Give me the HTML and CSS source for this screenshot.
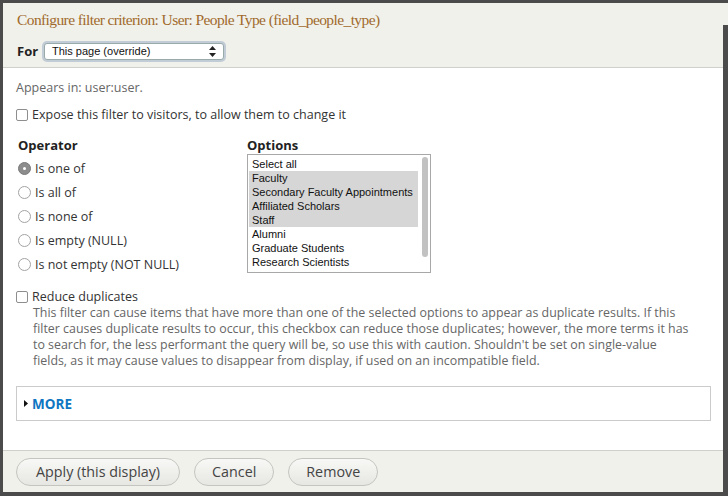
FILE: index.html
```html
<!DOCTYPE html>
<html>
<head>
<meta charset="utf-8">
<link rel="stylesheet" href="styles.css">
</head>
<body>
<div class="dialog">
  <div class="header">
    <h1 class="title">Configure filter criterion: User: People Type (field_people_type)</h1>
    <div class="for-row">
      <span class="for-label">For</span>
      <div class="select">
        <span>This page (override)</span>
        <svg class="arrows" width="7" height="11" viewBox="0 0 7 11"><path d="M3.5 0 L7 4 L0 4 Z M3.5 11 L7 7 L0 7 Z" fill="#222"/></svg>
      </div>
    </div>
  </div>
  <div class="body">
    <div class="appears">Appears in: user:user.</div>
    <label class="check-row"><span class="checkbox"></span>Expose this filter to visitors, to allow them to change it</label>
    <div class="columns">
      <div class="operator">
        <div class="col-title">Operator</div>
        <div class="radios">
          <label class="radio-row"><span class="radio checked"><span class="dot"></span></span>Is one of</label>
          <label class="radio-row"><span class="radio"></span>Is all of</label>
          <label class="radio-row"><span class="radio"></span>Is none of</label>
          <label class="radio-row"><span class="radio"></span>Is empty (NULL)</label>
          <label class="radio-row"><span class="radio"></span>Is not empty (NOT NULL)</label>
        </div>
      </div>
      <div class="options">
        <div class="col-title">Options</div>
        <div class="listbox">
          <div class="items">
            <div class="item">Select all</div>
            <div class="item sel">Faculty</div>
            <div class="item sel">Secondary Faculty Appointments</div>
            <div class="item sel">Affiliated Scholars</div>
            <div class="item sel">Staff</div>
            <div class="item">Alumni</div>
            <div class="item">Graduate Students</div>
            <div class="item">Research Scientists</div>
          </div>
          <div class="scroll"><div class="thumb"></div></div>
        </div>
      </div>
    </div>
    <label class="check-row reduce"><span class="checkbox"></span>Reduce duplicates</label>
    <p class="desc">This filter can cause items that have more than one of the selected options to appear as duplicate results. If this<br>filter causes duplicate results to occur, this checkbox can reduce those duplicates; however, the more terms it has<br>to search for, the less performant the query will be, so use this with caution. Shouldn't be set on single-value<br>fields, as it may cause values to disappear from display, if used on an incompatible field.</p>
    <div class="more">
      <svg class="tri" width="4" height="7" viewBox="0 0 4 7"><path d="M0 0 L4 3.5 L0 7 Z" fill="#111"/></svg>
      <span class="more-link">MORE</span>
    </div>
  </div>
  <div class="footer">
    <button class="btn wide">Apply (this display)</button>
    <button class="btn">Cancel</button>
    <button class="btn">Remove</button>
  </div>
</div>
</body>
</html>
```
FILE: styles.css
```css
html, body {
  margin: 0;
  padding: 0;
}
body {
  background: #4b4b4b;
  width: 728px;
  height: 496px;
  overflow: hidden;
  position: relative;
  font-family: "Open Sans", "DejaVu Sans", sans-serif;
}
.dialog {
  margin: 3px 0 0 3px;
  width: 720px;
  height: 489px;
  background: #fff;
  display: flex;
  flex-direction: column;
  position: relative;
}
.header {
  background: #f1f1eb;
  height: 64px;
  border-bottom: 1px solid #cfcfcb;
  padding: 0 0 0 14px;
  position: relative;
}
.header::after {
  content: "";
  position: absolute;
  top: 0;
  right: -5px;
  width: 5px;
  height: 22px;
  background: #f1f1eb;
}
.title {
  margin: 0;
  padding-top: 7px;
  font-family: "Liberation Serif", serif;
  font-weight: normal;
  font-size: 15.5px;
  letter-spacing: -0.6px;
  color: #a06a2c;
  line-height: 20px;
}
.for-row {
  display: flex;
  align-items: center;
  margin-top: 12px;
}
.for-label {
  font-weight: bold;
  font-size: 13px;
  color: #222;
  width: 25px;
}
.select {
  width: 164px;
  height: 15px;
  border: 1px solid #9aa;
  box-shadow: 0 0 0 2px #c2ccd6;
  border-radius: 3px;
  background: #fff;
  display: flex;
  align-items: center;
  justify-content: space-between;
  padding: 0 7px 0 7px;
  box-sizing: content-box;
  font-family: "Liberation Sans", sans-serif;
  font-size: 11px;
  color: #111;
  margin-left: 2px;
}
.body {
  flex: 1;
  padding: 12px 12px 0 13px;
  font-size: 12.5px;
  color: #333;
}
.appears {
  color: #666;
  line-height: 15px;
}
.check-row {
  display: flex;
  align-items: center;
  margin-top: 12px;
  color: #333;
  line-height: 15px;
}
.checkbox {
  width: 10px;
  height: 10px;
  border: 1px solid #8e8e8e;
  border-radius: 2px;
  background: #fff;
  margin-right: 4px;
  display: inline-block;
}
.columns {
  display: flex;
  margin-top: 15px;
}
.operator {
  width: 231px;
  padding-left: 2px;
  box-sizing: border-box;
}
.col-title {
  font-weight: bold;
  font-size: 13px;
  color: #222;
  line-height: 16px;
}
.radios { margin-top: 3px; }
.radio-row {
  display: flex;
  align-items: center;
  height: 24px;
  color: #333;
}
.radio {
  width: 11px;
  height: 11px;
  border: 1px solid #a3a3a3;
  border-radius: 50%;
  background: #fff;
  margin-right: 4px;
  display: inline-flex;
  align-items: center;
  justify-content: center;
}
.radio.checked {
  background: #8c8c8c;
  border-color: #7a7a7a;
}
.dot {
  width: 3px;
  height: 3px;
  border-radius: 50%;
  background: #fff;
}
.listbox {
  margin-top: 1px;
  width: 184px;
  height: 119px;
  border: 1px solid #a8a8a8;
  display: flex;
  font-family: "Liberation Sans", sans-serif;
  font-size: 11px;
  color: #111;
  box-sizing: border-box;
}
.items {
  flex: 1;
  padding: 2px 0 0 1px;
}
.item {
  height: 14px;
  line-height: 14px;
  padding-left: 3px;
}
.item.sel { background: #d6d6d6; }
.scroll {
  width: 12px;
  padding: 2px 0 0 4px;
  box-sizing: border-box;
}
.thumb {
  width: 6px;
  height: 100px;
  border-radius: 3px;
  background: #c2c2c2;
}
.reduce {
  margin-top: 14px;
  line-height: 14px;
}
.desc {
  margin: 1px 0 0 17px;
  white-space: nowrap;
  color: #666;
  line-height: 16px;
  font-size: 12.4px;
}
.more {
  margin: 17px 0 0 0;
  height: 33px;
  border: 1px solid #cbcbcb;
  display: flex;
  align-items: center;
  padding-left: 7px;
}
.tri { margin-right: 4px; }
.more-link {
  color: #0f76c2;
  font-weight: bold;
  font-size: 13.5px;
}
.footer {
  height: 42px;
  border-top: 1px solid #cfcfcb;
  background: #f1f1eb;
  display: flex;
  align-items: center;
  padding-left: 13px;
  gap: 14px;
  box-sizing: border-box;
}
.btn {
  height: 28px;
  border: 1px solid #c4c4c0;
  border-radius: 14px;
  background: linear-gradient(#f8f8f6, #e6e6e2);
  font-family: "Open Sans", "DejaVu Sans", sans-serif;
  font-size: 14.3px;
  color: #444;
  padding: 0 17px;
}
.btn.wide { padding: 0 19px; }
```
